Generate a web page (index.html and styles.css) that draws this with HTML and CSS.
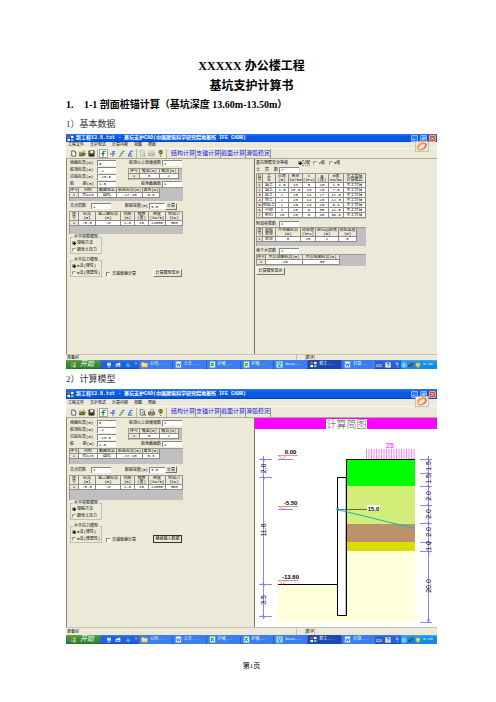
FILE: index.html
```html
<!DOCTYPE html>
<html lang="zh-CN">
<head>
<meta charset="utf-8">
<title>基坑支护计算书</title>
<link rel="stylesheet" href="styles.css">
</head>
<body>
<svg class="defs" aria-hidden="true">
  <symbol id="i-new" viewBox="0 0 16 16"><path d="M4 2h6l3 3v9H4z" fill="#fff" stroke="#222" stroke-width="1.5"/><path d="M10 2v3h3" fill="none" stroke="#222"/></symbol>
  <symbol id="i-open" viewBox="0 0 16 16"><path d="M1 5h5l1 1h5v7H1z" fill="#e8d860" stroke="#333"/><path d="M1 13l3-5h11l-3 5z" fill="#8c8420" stroke="#222"/><path d="M9 3q3-2 4 1" fill="none" stroke="#222"/></symbol>
  <symbol id="i-save" viewBox="0 0 16 16"><path d="M2 2h12v12H2z" fill="#6b6a20" stroke="#111" stroke-width="1.5"/><path d="M5 2h7v5H5z" fill="#eee"/><path d="M5 10h7v4H5z" fill="#222"/></symbol>
  <symbol id="i-pile" viewBox="0 0 16 16"><path d="M7 15V3h7M2 8h9" fill="none" stroke="#00863c" stroke-width="2"/><path d="M7 2v13" stroke="#333"/></symbol>
  <symbol id="i-anchor" viewBox="0 0 16 16"><path d="M2 9h6M8 4h6M9 15V3" fill="none" stroke="#2450e0" stroke-width="2"/><path d="M9 9h5" stroke="#d02080" stroke-width="2"/></symbol>
  <symbol id="i-slope" viewBox="0 0 16 16"><path d="M2 14h4L11 3h4" fill="none" stroke="#00904c" stroke-width="2"/><path d="M5 8h7" stroke="#30b8b8" stroke-width="2"/></symbol>
  <symbol id="i-nail" viewBox="0 0 16 16"><path d="M3 14L8 3h5M5 9h6M3 14h9" fill="none" stroke="#2048d8" stroke-width="2"/></symbol>
  <symbol id="i-preview" viewBox="0 0 16 16"><path d="M3 1h6l3 3v10H3z" fill="#fff" stroke="#222" stroke-width="1.4"/><circle cx="10" cy="9" r="3" fill="#b8e8f0" stroke="#222"/><path d="M12 11l3 4" stroke="#222" stroke-width="2"/></symbol>
  <symbol id="i-print" viewBox="0 0 16 16"><path d="M5 6l1-4h7l-1 4" fill="#fff" stroke="#333"/><path d="M1 7h14v6H1z" fill="#aaa" stroke="#222" stroke-width="1.4"/><path d="M4 11h8v3H4z" fill="#dcd060" stroke="#222"/></symbol>
  <symbol id="i-help" viewBox="0 0 16 16"><path d="M5 6q0-4 3-4t3 3q0 2-3 4v2" fill="none" stroke="#222" stroke-width="4"/><path d="M5 6q0-4 3-4t3 3q0 2-3 4v2" fill="none" stroke="#d8c800" stroke-width="2"/><path d="M7 13h3v2H7z" fill="#444"/></symbol>
  <symbol id="i-app" viewBox="0 0 16 16"><path d="M1 2h6v5H1z" fill="#e84a3a"/><path d="M9 2h6v5H9z" fill="#f4f4f4"/><path d="M1 9h6v5H1z" fill="#fff"/><path d="M9 9h6v5H9z" fill="#7fd060"/></symbol>
  <symbol id="i-flag" viewBox="0 0 16 16"><path d="M2 3q3-2 5 0v5q-3-2-6 0z" fill="#f05a28"/><path d="M8 3q3 2 6 0l-1 5q-3 2-5 0z" fill="#8fd840"/><path d="M1 9q3-2 6 0v5q-3-2-6 0z" fill="#4a9cf0"/><path d="M8 9q3 2 5 0v5q-3 2-5 0z" fill="#ffd840"/></symbol>
  <symbol id="i-folder" viewBox="0 0 16 16"><path d="M1 3h6l1 2h7v9H1z" fill="#f8dc70" stroke="#b48818"/><path d="M1 7h14" stroke="#fff6c0" stroke-width="2"/></symbol>
  <symbol id="i-word" viewBox="0 0 16 16"><path d="M2 1h12v14H2z" fill="#f4f8ff" stroke="#8fa8dc"/><path d="M4 5l2 7 2-6 2 6 2-7" fill="none" stroke="#2c58b8" stroke-width="1.6"/></symbol>
  <symbol id="i-excel" viewBox="0 0 16 16"><path d="M2 1h12v14H2z" fill="#f0fff0" stroke="#7cc07c"/><path d="M4 4l7 8M11 4l-7 8" stroke="#208038" stroke-width="2.4"/></symbol>
  <symbol id="i-note" viewBox="0 0 16 16"><path d="M1 1h14v14H1z" fill="#bff4f4"/><path d="M4 3h8v10H4z" fill="#188c98"/><path d="M5 12l3-8 3 8" fill="none" stroke="#fff" stroke-width="1.6"/></symbol>
  <symbol id="i-desk" viewBox="0 0 16 16"><path d="M3 2h10v8H3z" fill="#c8ecff"/><path d="M5 11h6l1 4H4z" fill="#68b4f0"/></symbol>
  <symbol id="i-mail" viewBox="0 0 16 16"><path d="M2 4h12v9H2z" fill="#e8f4ff"/><path d="M4 8h8v4H4z" fill="#4a88d8"/><path d="M9 2h5v4H9z" fill="#fff"/></symbol>
  <symbol id="i-web" viewBox="0 0 16 16"><path d="M13 9H4q0-5 4-5t5 5M4 9q1 5 8 3" fill="none" stroke="#38c8f4" stroke-width="2.4"/></symbol>
  <symbol id="i-key" viewBox="0 0 16 16"><path d="M1 6h14v7H1z" fill="#c8c090"/><path d="M3 9h10" stroke="#444" stroke-width="2"/></symbol>
  <symbol id="i-q" viewBox="0 0 16 16"><path d="M1 1h14v14H1z" fill="#f4f4e4"/><path d="M5 6q0-3 3-3t3 3q0 2-3 3v1M8 12v2" fill="none" stroke="#223" stroke-width="2"/></symbol>
  <symbol id="i-dots" viewBox="0 0 16 16"><path d="M4 3h8M6 7h6M8 12l3 2" stroke="#e4f0ff" stroke-width="2"/></symbol>
  <symbol id="i-chev" viewBox="0 0 16 16"><circle cx="8" cy="8" r="7" fill="#48b8f8" stroke="#b8e8ff"/><path d="M10 4L6 8l4 4" fill="none" stroke="#fff" stroke-width="2"/></symbol>
  <symbol id="i-net" viewBox="0 0 16 16"><path d="M1 7h8v6H1z" fill="#384858"/><path d="M7 2h8v7H7z" fill="#6a4858"/><path d="M8 11l5 4" stroke="#e04030" stroke-width="2"/></symbol>
  <symbol id="i-shield" viewBox="0 0 16 16"><path d="M2 2h12v8l-6 5-6-5z" fill="#f0d830"/><path d="M5 4h7v5H5z" fill="#f8f8e0" stroke="#806820"/></symbol>
  <symbol id="i-logo" viewBox="0 0 42 33"><path d="M1 1h40v31H1z" fill="#ece8e0" stroke="#aaa49a" stroke-width="2"/><ellipse cx="21" cy="16" rx="13" ry="8" transform="rotate(-28 21 16)" fill="none" stroke="#f09850" stroke-width="6"/><path d="M10 22q9 4 18-6" fill="none" stroke="#fff" stroke-width="2"/><path d="M30 7q7 7-5 15" fill="none" stroke="#dc6424" stroke-width="3"/></symbol>
</svg>

<main class="page">
  <header class="doc-title">
    <h1>XXXXX 办公楼工程</h1>
    <h1>基坑支护计算书</h1>
  </header>
  <h2><span class="num">1.</span>1-1 剖面桩锚计算（基坑深度 13.60m-13.50m）</h2>

  <h3>1）基本数据</h3>
  <section class="window short">
    <div class="titlebar"><svg class="ico"><use href="#i-app"/></svg><span class="caption">新工程13.6.txt - 基坑支护CAD(中国建筑科学研究院地基所 IFE CADB)</span>
      <button class="wb" aria-label="最小化"><svg viewBox="0 0 7 7"><path d="M1 5h3" stroke="#fff"/></svg></button><button class="wb" aria-label="还原"><svg viewBox="0 0 7 7"><path d="M1.500 3h3v2.500h-3zM3 3V1.500h3V4H5" fill="none" stroke="#fff" stroke-width=".8"/></svg></button><button class="wb close" aria-label="关闭"><svg viewBox="0 0 7 7"><path d="M1.500 1.500l4 4M5.500 1.500l-4 4" stroke="#fff"/></svg></button></div>
    <nav class="menu"><a href="#">工程文件</a><a href="#">支护型式</a><a href="#">计算内容</a><a href="#">视图</a><a href="#">帮助</a></nav>
    <svg class="logo"><use href="#i-logo"/></svg>
    <div class="toolbar">
      <div class="tools"><button aria-label="新建"><svg class="ico"><use href="#i-new"/></svg></button><button aria-label="打开"><svg class="ico"><use href="#i-open"/></svg></button><button aria-label="保存"><svg class="ico"><use href="#i-save"/></svg></button></div>
      <div class="tools"><button class="on" aria-label="排桩"><svg class="ico"><use href="#i-pile"/></svg></button><button aria-label="锚杆"><svg class="ico"><use href="#i-anchor"/></svg></button><button aria-label="放坡"><svg class="ico"><use href="#i-slope"/></svg></button><button aria-label="土钉"><svg class="ico"><use href="#i-nail"/></svg></button></div>
      <div class="tools"><button class="dim" aria-label="预览"><svg class="ico"><use href="#i-preview"/></svg></button><button class="dim" aria-label="打印"><svg class="ico"><use href="#i-print"/></svg></button><button aria-label="关于"><svg class="ico"><use href="#i-help"/></svg></button></div>
      <div class="calc"><button>结构计算</button><button>支锚计算</button><button>截面计算</button><button>滑弧稳定</button></div>
    </div>
    <div class="body">
      <form class="left">
        <div class="fields">
          <label for="a1">地面标高(m)</label><input id="a1" value="0"><label class="r" for="a2">桩顶以上放坡级数</label><input id="a2" value="1">
          <label for="a3">桩顶标高(m)</label><input id="a3" value="-2">
          <div class="sheet slopes"><table class="t-slope"><tr><th>序号</th><th>坡宽(m)</th><th>坡高(m)</th></tr><tr><th>1</th><td>0</td><td>2</td></tr></table></div>
          <label for="a4">坑底标高(m)</label><input id="a4" value="-13.6">
          <label for="a5" class="wide"><span>桩</span><span>距(m)</span></label><input id="a5" value="1.6"><label class="r" for="a6">桩身截面数</label><input id="a6" value="1">
        </div>
        <div class="sheet s-pile"><table class="t-pile"><tr><th>序号</th><th>材料</th><th>截面型式</th><th>桩底标高(m)</th><th>直径(m)</th></tr><tr><th>1</th><td>砼C25</td><td>圆形</td><td>-17.10</td><td>0.8</td></tr></table></div>
        <div class="support"><label for="a7">支点层数</label><input id="a7" value="1"><label class="r" for="a8">嵌固深度(m)</label><input class="sm" id="a8" value="3.5"><button type="button" class="btn">计算</button></div>
        <div class="sheet s-sup"><table class="t-sup"><tr class="hd"><th>序<br>号</th><th>标高<br>(m)</th><th>施工面标高<br>(m)</th><th>间距<br>(m)</th><th>倾角<br>(度)</th><th>刚度<br>(kN/m)</th><th>预加力<br>(kN)</th></tr><tr><th>1</th><td>-5.5</td><td>-6</td><td>1.6</td><td>15</td><td>11000</td><td>300</td></tr></table></div>
        <fieldset><legend>水平荷载模型</legend><label><input type="radio" name="load" checked>规程方法</label><label><input type="radio" name="load">朗肯土压力</label></fieldset>
        <div class="last"><fieldset><legend>水平抗力模型</legend><label><input type="radio" name="res" checked>m法(弹性)</label><label><input type="radio" name="res">m法(弹塑性)</label></fieldset><label class="opt"><input type="checkbox">支锚替换计算</label><button type="button" class="btn big">计算模型显示</button></div>
      </form>
      <form class="right">
        <div class="line grade"><span>基坑侧壁安全等级</span><label><input type="radio" name="g" checked><span class="dot">1级</span></label><label><input type="radio" name="g">2级</label><label><input type="radio" name="g">3级</label></div>
        <div class="line"><label class="wide" for="b1"><span>土</span><span>层</span><span>数</span></label><input id="b1" value="7"></div>
        <div class="sheet s-soil"><table class="t-soil">
          <tr class="hd"><th>层<br>号</th><th>土<br>名</th><th>层厚<br>(m)</th><th>容重<br>kN/m3</th><th>C<br>(kPa)</th><th>φ<br>(度)</th><th>m值<br>MN/m4</th><th>水土合算<br>计算模式</th></tr>
          <tr><th>1</th><td>填土</td><td>1.5</td><td>18</td><td>5</td><td>10</td><td>1.5</td><td>水土分算</td></tr>
          <tr><th>2</th><td>填土</td><td>1.5</td><td>18.5</td><td>10</td><td>20</td><td>7.0</td><td>水土分算</td></tr>
          <tr><th>3</th><td>粘土</td><td>2</td><td>20</td><td>18</td><td>27</td><td>12.9</td><td>水土分算</td></tr>
          <tr><th>4</th><td>粉土</td><td>2</td><td>20</td><td>14</td><td>26</td><td>12.3</td><td>水土分算</td></tr>
          <tr><th>5</th><td>粉粘土</td><td>2</td><td>20</td><td>28</td><td>15</td><td>5.8</td><td>水土合算</td></tr>
          <tr><th>6</th><td>中砂</td><td>1</td><td>20</td><td>0</td><td>35</td><td>21.0</td><td>水土分算</td></tr>
          <tr><th>7</th><td>卵石</td><td>20</td><td>20</td><td>0</td><td>45</td><td>38.0</td><td>水土分算</td></tr>
        </table></div>
        <div class="line"><label class="wide" for="b2">附加荷载数</label><input id="b2" value="1"></div>
        <div class="sheet s-load"><table class="t-load"><tr class="hd"><th>序<br>号</th><th>荷载<br>类型</th><th>作用面标高<br>(m)</th><th>荷载值<br>(kPa)</th><th>距坑边距离<br>(m)</th><th>荷载宽度<br>(m)</th></tr><tr><th>1</th><td>局部</td><td>0</td><td>25</td><td>2</td><td>6</td></tr></table></div>
        <div class="line"><label class="wide" for="b3">地下水层数</label><input id="b3" value="1"></div>
        <div class="sheet s-water"><table class="t-water"><tr><th>序号</th><th>水层顶面标高(m)</th><th>水层底面标高(m)</th></tr><tr><th>1</th><td>-20</td><td>-30</td></tr></table></div>
        <button type="button" class="btn big">计算模型显示</button>
      </form>
    </div>
    <div class="status"><span>准备好</span><span class="cell"></span><span class="cell">数字</span><span class="cell tail"></span></div>
    <div class="taskbar">
      <button class="start"><svg class="ico"><use href="#i-flag"/></svg>开始</button>
      <div class="quick"><svg class="ico"><use href="#i-desk"/></svg><svg class="ico"><use href="#i-mail"/></svg><svg class="ico"><use href="#i-web"/></svg><span>»</span></div>
      <div class="tasks"><button><svg class="ico"><use href="#i-folder"/></svg>公司...</button><button><svg class="ico"><use href="#i-word"/></svg>土方...</button><button><svg class="ico"><use href="#i-excel"/></svg>护坡...</button><button><svg class="ico"><use href="#i-excel"/></svg>护坡...</button><button><svg class="ico"><use href="#i-note"/></svg>baoC...</button><button class="act"><svg class="ico"><use href="#i-app"/></svg>新工...</button><button><svg class="ico"><use href="#i-word"/></svg>计算...</button></div>
      <div class="lang"><svg class="ico"><use href="#i-key"/></svg><svg class="ico"><use href="#i-q"/></svg><svg class="ico"><use href="#i-dots"/></svg></div>
      <div class="tray"><svg class="ico"><use href="#i-chev"/></svg><svg class="ico"><use href="#i-net"/></svg><svg class="ico"><use href="#i-shield"/></svg><time>9:28</time></div>
    </div>
  </section>

  <h3>2）计算模型</h3>
  <section class="window tall">
    <div class="titlebar"><svg class="ico"><use href="#i-app"/></svg><span class="caption">新工程13.6.txt - 基坑支护CAD(中国建筑科学研究院地基所 IFE CADB)</span>
      <button class="wb" aria-label="最小化"><svg viewBox="0 0 7 7"><path d="M1 5h3" stroke="#fff"/></svg></button><button class="wb" aria-label="还原"><svg viewBox="0 0 7 7"><path d="M1.500 3h3v2.500h-3zM3 3V1.500h3V4H5" fill="none" stroke="#fff" stroke-width=".8"/></svg></button><button class="wb close" aria-label="关闭"><svg viewBox="0 0 7 7"><path d="M1.500 1.500l4 4M5.500 1.500l-4 4" stroke="#fff"/></svg></button></div>
    <nav class="menu"><a href="#">工程文件</a><a href="#">支护型式</a><a href="#">计算内容</a><a href="#">视图</a><a href="#">帮助</a></nav>
    <svg class="logo"><use href="#i-logo"/></svg>
    <div class="toolbar">
      <div class="tools"><button aria-label="新建"><svg class="ico"><use href="#i-new"/></svg></button><button aria-label="打开"><svg class="ico"><use href="#i-open"/></svg></button><button aria-label="保存"><svg class="ico"><use href="#i-save"/></svg></button></div>
      <div class="tools"><button class="on" aria-label="排桩"><svg class="ico"><use href="#i-pile"/></svg></button><button aria-label="锚杆"><svg class="ico"><use href="#i-anchor"/></svg></button><button aria-label="放坡"><svg class="ico"><use href="#i-slope"/></svg></button><button aria-label="土钉"><svg class="ico"><use href="#i-nail"/></svg></button></div>
      <div class="tools"><button aria-label="预览"><svg class="ico"><use href="#i-preview"/></svg></button><button aria-label="打印"><svg class="ico"><use href="#i-print"/></svg></button><button aria-label="关于"><svg class="ico"><use href="#i-help"/></svg></button></div>
      <div class="calc"><button>结构计算</button><button>支锚计算</button><button>截面计算</button><button>滑弧稳定</button></div>
    </div>
    <div class="body">
      <form class="left">
        <div class="fields">
          <label for="c1">地面标高(m)</label><input id="c1" value="0"><label class="r" for="c2">桩顶以上放坡级数</label><input id="c2" value="1">
          <label for="c3">桩顶标高(m)</label><input id="c3" value="-2">
          <div class="sheet slopes"><table class="t-slope"><tr><th>序号</th><th>坡宽(m)</th><th>坡高(m)</th></tr><tr><th>1</th><td>0</td><td>2</td></tr></table></div>
          <label for="c4">坑底标高(m)</label><input id="c4" value="-13.6">
          <label for="c5" class="wide"><span>桩</span><span>距(m)</span></label><input id="c5" value="1.6"><label class="r" for="c6">桩身截面数</label><input id="c6" value="1">
        </div>
        <div class="sheet s-pile"><table class="t-pile"><tr><th>序号</th><th>材料</th><th>截面型式</th><th>桩底标高(m)</th><th>直径(m)</th></tr><tr><th>1</th><td>砼C25</td><td>圆形</td><td>-17.10</td><td>0.8</td></tr></table></div>
        <div class="support"><label for="c7">支点层数</label><input id="c7" value="1"><label class="r" for="c8">嵌固深度(m)</label><input class="sm" id="c8" value="3.5"><button type="button" class="btn">计算</button></div>
        <div class="sheet s-sup"><table class="t-sup"><tr class="hd"><th>序<br>号</th><th>标高<br>(m)</th><th>施工面标高<br>(m)</th><th>间距<br>(m)</th><th>倾角<br>(度)</th><th>刚度<br>(kN/m)</th><th>预加力<br>(kN)</th></tr><tr><th>1</th><td>-5.5</td><td>-6</td><td>1.6</td><td>15</td><td>11000</td><td>300</td></tr></table></div>
        <fieldset><legend>水平荷载模型</legend><label><input type="radio" name="load" checked>规程方法</label><label><input type="radio" name="load">朗肯土压力</label></fieldset>
        <div class="last"><fieldset><legend>水平抗力模型</legend><label><input type="radio" name="res" checked>m法(弹性)</label><label><input type="radio" name="res">m法(弹塑性)</label></fieldset><label class="opt"><input type="checkbox">支锚替换计算</label><button type="button" class="btn big focus">继续输入数据</button></div>
      </form>
      <div class="right plot">
        <svg viewBox="0 0 182 209" preserveAspectRatio="xMidYMin meet" role="img" aria-label="计算简图">
          <rect width="182" height="209" fill="#fff"/>
          <rect width="182" height="11" fill="#f0f"/><rect x="71" y="1" width="41" height="10" fill="#fff"/>
          <text class="cap" x="91.500" y="10">计算简图</text>
          <path d="M111.500 31v10M114 31v10M116.500 31v10M119 31v10M121.500 31v10M124 31v10M126.500 31v10M129 31v10M131.500 31v10M134 31v10M136.500 31v10M139 31v10M141.500 31v10M144 31v10M146.500 31v10M149 31v10M151.500 31v10M154 31v10M156.500 31v10M159 31v10" stroke="#f050e8" stroke-width=".7"/>
          <text class="mag" x="135" y="30">25</text>
          <rect x="23" y="166" width="137" height="38" fill="#ffffdc"/>
          <rect x="92" y="133" width="68" height="71" fill="#ffffdc"/>
          <rect x="92" y="41" width="68" height="27" fill="#0f0"/>
          <rect x="92" y="68" width="68" height="38" fill="#d2ee78"/>
          <rect x="92" y="106" width="68" height="18" fill="#bc926b"/>
          <rect x="92" y="124" width="68" height="9" fill="#dcdc00"/>
          <rect x="82.500" y="59.500" width="9" height="138" fill="#fff" stroke="#000"/>
          <path d="M91.500 41v18M91 41.500h69M23 166.500h59" stroke="#000" fill="none"/>
          <path d="M90.500 60v137" stroke="#999" stroke-width=".6"/>
          <path d="M82 91.500h31" stroke="#333" stroke-width=".7"/>
          <path d="M82 91.500L160 110.500" stroke="#10b8c0"/>
          <path d="M80 91l4-1v3z" fill="#10b8c0"/>
          <rect x="112" y="87" width="13" height="6" fill="#fff"/>
          <text x="118.500" y="92.500" class="b">15.0</text>
          <g stroke="#e86060" stroke-width=".7" fill="none"><path d="M23 37.500h20M24 37.500l3.500 4 3.500-4M23 88.500h20M24 88.500l3.500 3 3.500-3M23 162.500h20M24 162.500l3.500 4 3.500-4"/></g>
          <path d="M23 41.500h15M23 91.500h15" stroke="#5858f0" stroke-width=".7"/>
          <text x="35.500" y="35.500" class="b">0.00</text><text x="35.500" y="86.500" class="b">-5.50</text><text x="35.500" y="160.500" class="b">-13.60</text>
          <g stroke="#6868f4" fill="none"><path stroke-width=".8" d="M8.500 38v163M4 41.500h13M4 59.500h13M4 166.500h13M4 198.500h13M173.500 38v166M165 41.500h12M165 55.500h12M165 68.500h12M165 87.500h12M165 105.500h12M165 124.500h12M165 133.500h12M165 204.500h12"/>
          <path stroke-width=".6" d="M7 40l3 3M7 58l3 3M7 165l3 3M7 197l3 3M172 40l3 3M172 54l3 3M172 67l3 3M172 86l3 3M172 104l3 3M172 123l3 3M172 132l3 3M172 201l1.500 3 1.500-3"/></g>
          <g class="dim-t"><text transform="translate(10.500 50.500) rotate(-90)">2.0</text><text transform="translate(10.500 112) rotate(-90)">11.6</text><text transform="translate(10.500 182) rotate(-90)">3.5</text>
          <text transform="translate(175.500 48) rotate(-90)">1.5</text><text transform="translate(175.500 61) rotate(-90)">1.5</text><text transform="translate(175.500 78) rotate(-90)">2.0</text><text transform="translate(175.500 96) rotate(-90)">2.0</text><text transform="translate(175.500 114) rotate(-90)">2.0</text><text transform="translate(175.500 128) rotate(-90)">1.0</text><text transform="translate(175.500 168) rotate(-90)">20.0</text></g>
        </svg>
      </div>
    </div>
    <div class="status"><span>准备好</span><span class="cell"></span><span class="cell">数字</span><span class="cell tail"></span></div>
    <div class="taskbar">
      <button class="start"><svg class="ico"><use href="#i-flag"/></svg>开始</button>
      <div class="quick"><svg class="ico"><use href="#i-desk"/></svg><svg class="ico"><use href="#i-mail"/></svg><svg class="ico"><use href="#i-web"/></svg><span>»</span></div>
      <div class="tasks"><button><svg class="ico"><use href="#i-folder"/></svg>公司...</button><button><svg class="ico"><use href="#i-word"/></svg>土方...</button><button><svg class="ico"><use href="#i-excel"/></svg>护坡...</button><button><svg class="ico"><use href="#i-excel"/></svg>护坡...</button><button><svg class="ico"><use href="#i-note"/></svg>baoC...</button><button class="act"><svg class="ico"><use href="#i-app"/></svg>新工...</button><button><svg class="ico"><use href="#i-word"/></svg>计算...</button></div>
      <div class="lang"><svg class="ico"><use href="#i-key"/></svg><svg class="ico"><use href="#i-q"/></svg><svg class="ico"><use href="#i-dots"/></svg></div>
      <div class="tray"><svg class="ico"><use href="#i-chev"/></svg><svg class="ico"><use href="#i-net"/></svg><svg class="ico"><use href="#i-shield"/></svg><time>9:28</time></div>
    </div>
  </section>
  <footer>第1页</footer>
</main>
</body>
</html>
```

FILE: styles.css
```css
* { box-sizing: border-box; }

body {
  margin: 0;
  background: #fff;
  color: #000;
  font-family: "Liberation Serif", "Noto Sans CJK SC", serif;
}

.defs { display: none; }

.page { padding: 56px 59px 0 66px; }

h1, h2, h3 { margin: 0; white-space: nowrap; }

.doc-title { text-align: center; }
h1 { font-size: 12px; line-height: 20px; }
h2 { font-size: 10px; line-height: 18px; }
h2 .num { display: inline-block; width: 18px; }
h3 {
  font-size: 9px;
  line-height: 20px;
  font-weight: 400;
  color: #333;
}

footer {
  padding-top: 16px;
  font-size: 7px;
  line-height: 12px;
  text-align: center;
}

/* application window */
.window {
  --title: 8px;
  --menu: 6px;
  --tools: 11px;
  --body: 195px;
  --status: 6px;
  --fields: 27px;
  --pile: 14px;
  --support: 10px;
  --sup: 23px;
  position: relative;
  background: #ece9d8;
  font: 4px/4px "Liberation Mono", "Noto Sans CJK SC", monospace;
  white-space: nowrap;
}
.window.tall {
  --title: 10px;
  --menu: 7px;
  --tools: 12px;
  --body: 209px;
  --status: 8px;
  --fields: 29px;
  --pile: 16px;
  --support: 11px;
  --sup: 25px;
}

.window button, .window input {
  margin: 0;
  padding: 0;
  border: 0;
  border-radius: 0;
  font: inherit;
  color: inherit;
  background: none;
  appearance: none;
}

.ico { width: 7px; height: 7px; flex: none; display: block; }

.titlebar {
  display: flex;
  align-items: center;
  gap: 2px;
  height: var(--title);
  padding: 0 1px;
  background: linear-gradient(#2a7cf4, #0a58e4 30%, #0458e8 80%, #0340b8);
  color: #fff;
  font-size: 5px;
  font-weight: 700;
}
.titlebar .caption { flex: 1; }
.window .wb {
  width: 7px;
  height: 7px;
  background: #3c78ec;
  border: 1px solid #8cb4f8;
  border-radius: 1px;
}
.window .wb.close { background: #e0502c; border-color: #f0a890; }
.wb svg { display: block; width: 100%; height: 100%; }

.menu {
  display: flex;
  align-items: center;
  gap: 6px;
  height: var(--menu);
  padding-left: 2px;
}
.menu a { color: #000; text-decoration: none; }

.logo {
  position: absolute;
  top: 7px;
  right: 8px;
  width: 14px;
  height: 11px;
}

.toolbar {
  display: flex;
  align-items: center;
  height: var(--tools);
  padding-left: 2px;
  border-top: 1px solid #f8f6ec;
  border-bottom: 1px solid #aca899;
}
.tools {
  display: flex;
  padding: 0 1px;
  border-right: 1px solid #b8b4a2;
}
.window .tools button {
  width: 9px;
  height: 9px;
  padding: 1px;
}
.window .tools .on { background: #fff; outline: 1px solid #aca899; outline-offset: -1px; }
.tools .dim { opacity: .4; }
.calc { display: flex; padding-left: 4px; }
.window .calc button {
  width: 25px;
  height: 9px;
  border-right: 1px solid #9a968a;
  color: #2222e8;
  font-size: 6px;
  line-height: 8px;
}

.body {
  display: grid;
  grid-template-columns: 188fr 183fr;
  height: var(--body);
}
.left {
  padding: 1px 0 0 3px;
  border-left: 1px solid #8a8778;
}
.right {
  padding-left: 1px;
  border-left: 1px solid #77756a;
}
.plot { padding: 0; background: #fff; }
.plot svg { display: block; width: 100%; height: 100%; overflow: visible; }

.fields {
  display: grid;
  grid-template-columns: 27px 19px 46px 20px;
  grid-auto-rows: 1fr;
  align-items: center;
  height: var(--fields);
}
.window input:not([type]) {
  width: 100%;
  height: 6px;
  padding-left: 1px;
  background: #fff;
  border: solid #8a8778;
  border-width: 1px 0 0 1px;
  line-height: 5px;
}
.r { padding-right: 1px; text-align: right; }
.wide { display: flex; justify-content: space-between; width: 24px; }
.slopes {
  grid-column: 3 / 5;
  grid-row: 2 / 4;
  justify-self: end;
  width: 54px;
  height: 12px;
}

.sheet { background: #c0c0c0; border: 1px solid #9c9a90; border-width: 1px 0 0 1px; overflow: hidden; }
.left > .sheet { width: 114px; margin-left: -1px; }
.s-pile { height: var(--pile); }
.s-sup { height: var(--sup); }
.right .sheet { width: 110px; }
.s-soil { height: 46px; }
.s-load { height: 19px; }
.s-water { height: 12px; }

table { border-spacing: 0; table-layout: fixed; }
tr { height: 5px; }
.hd { height: 8px; }
th, td {
  height: 5px;
  padding: 0;
  border: solid #8c8a82;
  border-width: 0 1px 1px 0;
  font-weight: 400;
  line-height: 4px;
  text-align: center;
  overflow: hidden;
  background: #fff;
}
th { background: #ece9d8; }
.hd th { height: 9px; }

.t-slope { width: 50px; }
.t-slope th:first-child { width: 11px; }
.t-pile { width: 90px; }
.t-pile th:nth-child(1) { width: 9px; }
.t-pile th:nth-child(2) { width: 19px; }
.t-pile th:nth-child(3) { width: 19px; }
.t-pile th:nth-child(4) { width: 26px; }
.t-sup { width: 113px; }
.t-sup th:nth-child(1) { width: 9px; }
.t-sup th:nth-child(2) { width: 17px; }
.t-sup th:nth-child(3) { width: 25px; }
.t-sup th:nth-child(4), .t-sup th:nth-child(5) { width: 14px; }
.t-sup th:nth-child(6) { width: 17px; }
.t-soil { width: 109px; }
.t-soil th:nth-child(1) { width: 6px; }
.t-soil th:nth-child(n+2) { width: 13px; }
.t-soil th:nth-child(4) { width: 14px; }
.t-soil th:nth-child(7) { width: 15px; }
.t-soil th:nth-child(8) { width: 22px; }
.t-load { width: 100px; }
.t-load th:nth-child(1) { width: 6px; }
.t-load th:nth-child(2) { width: 13px; }
.t-load th:nth-child(3) { width: 25px; }
.t-load th:nth-child(4) { width: 15px; }
.t-load th:nth-child(5) { width: 23px; }
.t-water { width: 83px; }
.t-water th:nth-child(1) { width: 9px; }

.support {
  display: grid;
  grid-template-columns: 21px 20px 38px 16px 12px;
  align-items: center;
  height: var(--support);
}

.window .btn {
  height: 7px;
  border: 1px solid #77756a;
  border-top-color: #fff;
  border-left-color: #fff;
  line-height: 4px;
  text-align: center;
}
.window .btn.big { width: 29px; height: 8px; }
.window .btn.focus { border-color: #333; }

fieldset {
  width: 32px;
  margin: 1px 0 0;
  padding: 0 0 0 1px;
  border: 1px solid #c2beae;
  min-width: 0;
}
legend { margin-left: 1px; padding: 0 1px; line-height: 4px; }
fieldset label, .opt, .grade label {
  display: flex;
  align-items: center;
  gap: 1px;
  height: 7px;
}
.window input[type="radio"], .window input[type="checkbox"] {
  width: 4px;
  height: 4px;
  flex: none;
  background: #fff;
  border: solid #8a8778;
  border-width: 1px 0 0 1px;
}
.window input[type="radio"] { border-radius: 2px; }
.window input[type="radio"]:checked {
  background: radial-gradient(circle, #000 1px, #fff 2px);
}
.last { display: flex; align-items: flex-end; padding-top: 3px; }
.last .opt { width: 51px; padding-left: 4px; gap: 2px; }

.line { display: flex; align-items: center; height: 7px; }
.right .wide { width: 23px; padding-right: 1px; }
.window .line input:not([type]) { width: 20px; }
.grade { gap: 4px; }
.grade > span { padding-right: 6px; }
.window .grade .dot { outline: 1px dotted #888; }
.right .btn { margin-top: 1px; }
.sheet + .line { margin-top: 1px; }

.cap { font: 10px "Noto Sans CJK SC", sans-serif; font-weight: 300; fill: #555; text-anchor: middle; }
.mag { font: 7px "Liberation Sans", sans-serif; fill: #f0f; text-anchor: middle; }
.b, .dim-t text { font: 6px "Liberation Sans", sans-serif; text-anchor: middle; fill: #000; }
.dim-t text { font-size: 7px; }
.b { font-weight: 700; }

.status {
  display: flex;
  align-items: center;
  height: var(--status);
  border-top: 1px solid #c8c4b4;
}
.status span:first-child { flex: 1; padding-left: 1px; }
.status .cell {
  display: flex;
  align-items: center;
  width: 9px;
  height: 100%;
  border-left: 1px solid #c2beae;
}
.status .tail { width: 123px; }

.taskbar {
  display: flex;
  align-items: stretch;
  height: 9px;
  background: linear-gradient(#3c80f0, #245edb 25%, #2460e0 80%, #1a48b0);
  color: #fff;
  line-height: 9px;
}
.window .start {
  display: flex;
  align-items: center;
  gap: 3px;
  width: 35px;
  padding-left: 4px;
  background: linear-gradient(#58a858, #3c903c 30%, #348834 80%, #246c24);
  border-radius: 0 4px 4px 0;
  font-size: 7px;
  font-style: italic;
}
.quick {
  display: flex;
  align-items: center;
  justify-content: space-around;
  width: 38px;
  padding-left: 3px;
}
.quick .ico, .lang .ico, .tray .ico { width: 6px; height: 6px; }
.tasks { display: flex; flex: 1; gap: 1px; }
.window .tasks button {
  display: flex;
  flex: 1;
  align-items: center;
  gap: 2px;
  min-width: 0;
  padding-left: 2px;
  background: #3c7ef0;
  border-radius: 1px;
}
.window .tasks .act { background: #1c48b0; }
.lang {
  display: flex;
  align-items: center;
  justify-content: space-around;
  width: 26px;
}
.tray {
  display: flex;
  align-items: center;
  gap: 1px;
  width: 36px;
  background: linear-gradient(#30b0f8, #1290e8 30%, #1488e4);
}
.tray time { padding-left: 1px; }
```
